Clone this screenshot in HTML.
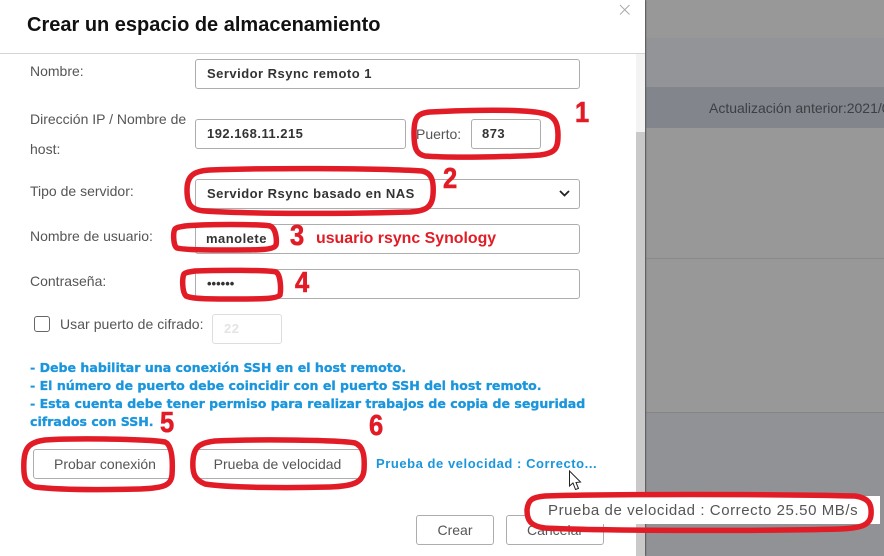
<!DOCTYPE html>
<html><head><meta charset="utf-8">
<style>
html,body{margin:0;padding:0}
body{width:884px;height:556px;overflow:hidden;position:relative;background:#989898;font-family:"Liberation Sans",sans-serif}
div{position:absolute;box-sizing:border-box;white-space:nowrap}
.lab{font-size:14px;color:#555;line-height:16px}
.in{border:1px solid #adadad;border-radius:3px;background:#fff;height:30px;font-size:13px;font-weight:bold;color:#333;line-height:28px;letter-spacing:.48px}
.btn{border:1px solid #adadad;border-radius:3px;background:#fff;height:30px;font-size:14px;color:#555;line-height:28px;text-align:center}
.blue{font-family:"DejaVu Sans",sans-serif;font-weight:bold;font-size:12.57px;color:#1b96dc;line-height:18px;left:30px;-webkit-text-stroke:.3px #1b96dc}
.n{font-size:29px;font-weight:bold;color:#e21c26;line-height:30px;transform:scaleX(.88);transform-origin:0 50%;-webkit-text-stroke:.6px #e21c26}
</style></head><body>
<div style="left:646px;top:38px;width:238px;height:49px;background:#939497"></div>
<div style="left:646px;top:87px;width:238px;height:41px;background:#82868c"></div>
<div style="left:646px;top:258px;width:238px;height:1px;background:#8a8a8a"></div>
<div style="left:646px;top:412px;width:238px;height:144px;background:#919296;border-top:1px solid #858585"></div>
<div style="left:709px;top:100px;font-size:14px;color:#3c4045;line-height:16px">Actualización anterior:2021/0</div>

<div style="left:0;top:0;width:645px;height:556px;background:#fff;box-shadow:1px 0 1px #555"></div>
<div style="left:0;top:53px;width:645px;height:1px;background:#d4d4d4"></div>
<div style="left:636px;top:54px;width:9px;height:502px;background:#f3f3f3"></div>
<div style="left:636px;top:132px;width:9px;height:424px;background:#c9c9c9"></div>
<div style="left:27px;top:13px;font-size:20px;font-weight:bold;color:#111;line-height:24px">Crear un espacio de almacenamiento</div>
<svg style="position:absolute;left:619px;top:4px" width="12" height="12"><path d="M1 1L10.500 10.500M10.500 1L1 10.500" stroke="#aaa" stroke-width="1" fill="none"/></svg>

<div class="lab" style="left:30px;top:63px">Nombre:</div>
<div class="in" style="left:195px;top:59px;width:385px;padding-left:11px">Servidor Rsync remoto 1</div>
<div class="lab" style="left:30px;top:111px">Dirección IP / Nombre de</div>
<div class="lab" style="left:30px;top:141px">host:</div>
<div class="in" style="left:195px;top:119px;width:211px;padding-left:11px">192.168.11.215</div>
<div class="lab" style="left:416px;top:126px">Puerto:</div>
<div class="in" style="left:471px;top:119px;width:70px;padding-left:10px">873</div>
<div class="lab" style="left:30px;top:183px">Tipo de servidor:</div>
<div class="in" style="left:195px;top:179px;width:385px;padding-left:11px">Servidor Rsync basado en NAS</div>
<svg style="position:absolute;left:559px;top:189px" width="12" height="10"><path d="M1 2L5.500 6.500L10 2" stroke="#222" stroke-width="1.800" fill="none"/></svg>
<div class="lab" style="left:30px;top:228px">Nombre de usuario:</div>
<div class="in" style="left:195px;top:224px;width:385px;padding-left:10px">manolete</div>
<div class="lab" style="left:30px;top:273px">Contraseña:</div>
<div class="in" style="left:195px;top:269px;width:385px;padding-left:11px;letter-spacing:0">••••••</div>
<div style="left:34px;top:316px;width:16px;height:16px;border:1.500px solid #666;border-radius:3px;background:#fff"></div>
<div class="lab" style="left:60px;top:316px;letter-spacing:.05px">Usar puerto de cifrado:</div>
<div class="in" style="left:212px;top:314px;width:70px;padding-left:11px;border-color:#ddd;color:#e4e4e4">22</div>

<div class="blue" style="top:359px">- Debe habilitar una conexión SSH en el host remoto.</div>
<div class="blue" style="top:377px">- El número de puerto debe coincidir con el puerto SSH del host remoto.</div>
<div class="blue" style="top:395px">- Esta cuenta debe tener permiso para realizar trabajos de copia de seguridad</div>
<div class="blue" style="top:413px">cifrados con SSH.</div>

<div class="btn" style="left:33px;top:449px;width:140px;padding-right:4px;padding-left:0"><span style="position:relative;left:4px">Probar conexión</span></div>
<div class="btn" style="left:192px;top:449px;width:171px">Prueba de velocidad</div>
<div style="left:376px;top:456px;font-size:13px;font-weight:bold;color:#1b96dc;line-height:16px;letter-spacing:.55px">Prueba de velocidad : Correcto...</div>
<div class="btn" style="left:416px;top:515px;width:78px">Crear</div>
<div class="btn" style="left:506px;top:515px;width:98px">Cancelar</div>

<svg style="position:absolute;left:568px;top:470px" width="16" height="21"><path d="M1.500 1L1.500 16L5 13L7.500 19.500L10.500 18.500L8 12.500L12.500 12Z" fill="#fff" stroke="#222" stroke-width="1"/></svg>

<div style="left:526px;top:496px;width:354px;height:28px;background:#fff"></div>
<div style="left:548px;top:502px;font-size:15px;color:#555;line-height:18px;letter-spacing:.57px">Prueba de velocidad : Correcto 25.50 MB/s</div>

<svg style="position:absolute;left:0;top:0" width="884" height="556" fill="none" stroke="#e21c26" stroke-width="5.500" stroke-linecap="round" stroke-linejoin="round">
<path d="M430 112C470 110 520 109 541 113C554 115 558 122 558 135C558 148 556 153 540 155C510 157 450 158 425 156C416 154 414 148 414 133C414 118 417 113 430 112Z"/>
<path d="M210 170C260 168 380 168 422 171C432 173 434 181 433 195C432 207 426 211 410 212C350 214 250 214 205 211C191 210 187 205 187 190C187 177 192 171 210 170Z"/>
<path d="M185 226C205 224 260 224 270 226C276 228 277 240 276 245C274 250 260 250 235 250C205 250 185 250 177 248C173 246 173 232 175 229C177 227 180 227 185 226Z"/>
<path d="M195 271C220 270 268 270 276 272C281 275 281 290 280 295C277 299 260 299 235 299C210 299 192 299 186 296C182 292 182 278 184 274C186 272 190 272 195 271Z"/>
<path d="M45 440C75 438 150 439 165 442C172 445 173 460 172 475C171 485 165 488 140 489C100 490 60 490 35 487C25 484 23 478 24 460C25 447 30 442 45 440Z"/>
<path d="M215 441C260 439 340 440 355 443C363 446 365 455 364 470C363 482 355 486 330 487C290 488 230 488 205 484C195 480 192 474 193 460C194 448 198 443 215 441Z"/>
<path d="M545 496C600 494 780 494 855 496C868 498 872 503 871 515C870 525 862 528 840 529C770 531 600 531 545 528C530 526 527 520 527 510C528 500 532 497 545 496Z"/>
</svg>
<div class="n" style="left:575px;top:98px">1</div>
<div class="n" style="left:443px;top:164px">2</div>
<div class="n" style="left:290px;top:221px">3</div>
<div class="n" style="left:295px;top:268px">4</div>
<div class="n" style="left:160px;top:408px">5</div>
<div class="n" style="left:369px;top:411px">6</div>
<div style="left:316px;top:230px;font-size:15.900px;font-weight:bold;color:#e21c26;line-height:18px">usuario rsync Synology</div>
</body></html>
